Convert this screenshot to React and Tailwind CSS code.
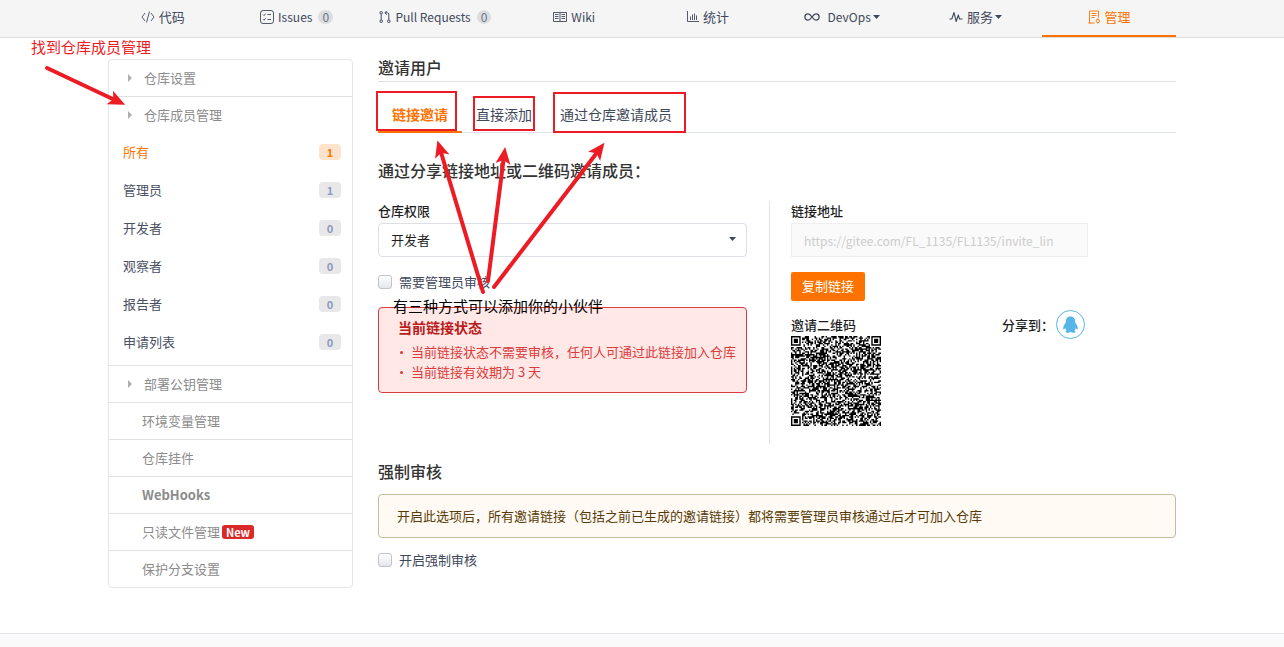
import { useState } from 'react';
import clsx from 'clsx';

function CodeIcon() {
  return (
    <svg width="14" height="14" viewBox="0 0 14 14" fill="none" stroke="currentColor" strokeWidth="0.9" aria-hidden="true">
      <path d="M4 3L1 7l3 4M10 3l3 4-3 4M8.5 1.5l-3 11" />
    </svg>
  );
}

function IssuesIcon() {
  return (
    <svg width="14" height="14" viewBox="0 0 14 14" fill="none" stroke="currentColor" strokeWidth="0.9" aria-hidden="true">
      <rect x="0.5" y="0.5" width="13" height="13" rx="2.5" />
      <path d="M3 4.6l1 1 1.6-2M3 9.2l1 1 1.6-2M7.5 4.5H11M7.5 9.5H11" />
    </svg>
  );
}

function PullIcon() {
  return (
    <svg width="12" height="14" viewBox="0 0 12 14" fill="none" stroke="currentColor" aria-hidden="true">
      <circle cx="2.2" cy="2.8" r="1.3" />
      <circle cx="2.2" cy="11.2" r="1.3" />
      <circle cx="9.8" cy="11.2" r="1.3" />
      <path d="M2.2 4.2v5.6M9.8 9.8V4.2Q9.8 2.8 8.4 2.8H6M7.8 0.9L5.9 2.8l1.9 1.9" />
    </svg>
  );
}

function WikiIcon() {
  return (
    <svg width="14" height="12" viewBox="0 0 14 12" fill="none" stroke="currentColor" strokeWidth="0.9" aria-hidden="true">
      <path d="M0.5 1.5h13v9h-13zM7 1.5v9.5M2 3.5h3.5M2 5.5h3.5M2 7.5h3.5M8.5 3.5H12M8.5 5.5H12M8.5 7.5H12" />
    </svg>
  );
}

function StatsIcon() {
  return (
    <svg width="12" height="13" viewBox="0 0 12 13" fill="none" stroke="currentColor" strokeWidth="0.9" aria-hidden="true">
      <path d="M0.5 1v10.5H12M3.5 6.5V10M5.5 4.5V10M7.5 3.5V10M9.5 5.5V10" />
    </svg>
  );
}

function DevOpsIcon() {
  return (
    <svg width="16" height="10" viewBox="0 0 16 10" fill="none" stroke="currentColor" strokeWidth="1.3" aria-hidden="true">
      <path d="M8 5C6.6 3 5.4 1.9 4 1.9a3.1 3.1 0 000 6.2C5.4 8.1 6.6 7 8 5s2.6-3.1 4-3.1a3.1 3.1 0 010 6.2C10.600 8.1 9.400 7 8 5z" />
    </svg>
  );
}

function PulseIcon() {
  return (
    <svg width="14" height="12" viewBox="0 0 14 12" fill="none" stroke="currentColor" strokeWidth="1.1" strokeLinejoin="round" aria-hidden="true">
      <path d="M0.500 8H2.800L5 1.500l2.200 9L9.300 4l1.200 4h3" />
    </svg>
  );
}

function ManageIcon() {
  return (
    <svg width="13" height="14" viewBox="0 0 13 14" fill="none" stroke="currentColor" strokeWidth="0.9" aria-hidden="true">
      <path d="M6.500 13H1.500V1h9v6.500M3.500 3.500h5M3.500 5.500h5M3.500 7.500h3M0.500 13h2" />
      <circle cx="9.800" cy="11" r="1.700" />
      <path d="M9.800 8.300v1M9.800 12.700v1" />
    </svg>
  );
}

function Caret({ className }) {
  return (
    <svg width="7" height="4" viewBox="0 0 7 4" fill="currentColor" className={className} aria-hidden="true">
      <path d="M0 0h7L3.500 4z" />
    </svg>
  );
}

function RightCaret() {
  return (
    <svg width="4" height="8" viewBox="0 0 4 8" fill="#b0b0b0" aria-hidden="true">
      <path d="M0 0l4 4-4 4z" />
    </svg>
  );
}

function QQIcon() {
  return (
    <svg width="29" height="29" viewBox="0 0 29 29" aria-hidden="true">
      <circle cx="14.500" cy="14.500" r="14" fill="#fff" stroke="#56b6e7" />
      <path
        fill="#56b6e7"
        d="M14.500 6.500c-3 0-4.800 2.200-4.700 5 0 .8-.1 1.100-.5 1.700-1.200 1.700-2.200 3.600-2.100 5.300 0 1 .4 1.300 1 .7l.9-1.100c.3 1.100.8 1.900 1.500 2.600-.8.300-1.200.8-1.100 1.400.2.900 3.700 1 5 0 1.300 1 4.800.9 5 0 .1-.6-.3-1.100-1.100-1.400.7-.7 1.200-1.500 1.500-2.600l.9 1.100c.6.6 1 .3 1-.7.100-1.700-.9-3.600-2.100-5.300-.4-.6-.5-.9-.5-1.700.1-2.800-1.700-5-4.700-5z"
      />
    </svg>
  );
}

const QR_SIZE = 65;

function finderCell(x, y) {
  const corners = [[0, 0], [QR_SIZE - 7, 0], [0, QR_SIZE - 7]];
  for (const [cx, cy] of corners) {
    const dx = x - cx;
    const dy = y - cy;
    if (dx >= -1 && dx <= 7 && dy >= -1 && dy <= 7) {
      const ring = Math.max(Math.abs(dx - 3), Math.abs(dy - 3));
      return ring !== 2 && ring !== 4;
    }
  }
  return null;
}

function buildQrPath() {
  let seed = 1135;
  let path = '';
  for (let y = 0; y < QR_SIZE; y++) {
    for (let x = 0; x < QR_SIZE; x++) {
      seed = (seed * 1103515245 + 12345) % 2147483648;
      const finder = finderCell(x, y);
      const dark = finder === null ? seed / 2147483648 < 0.54 : finder;
      if (dark) path += `M${x} ${y}h1v1h-1z`;
    }
  }
  return path;
}

const qrPath = buildQrPath();

function QrCode() {
  return (
    <svg width="90" height="90" viewBox={`0 0 ${QR_SIZE} ${QR_SIZE}`} role="img" aria-label="邀请二维码">
      <path d={qrPath} fill="#000" />
    </svg>
  );
}

const navItems = [
  { label: '代码', icon: CodeIcon },
  { label: 'Issues', icon: IssuesIcon, count: 0, latin: true },
  { label: 'Pull Requests', icon: PullIcon, count: 0, latin: true },
  { label: 'Wiki', icon: WikiIcon, latin: true },
  { label: '统计', icon: StatsIcon },
  { label: 'DevOps', icon: DevOpsIcon, dropdown: true, wide: true, latin: true },
  { label: '服务', icon: PulseIcon, dropdown: true },
  { label: '管理', icon: ManageIcon, active: true },
];

const memberItems = [
  { label: '所有', count: 1, active: true },
  { label: '管理员', count: 1 },
  { label: '开发者', count: 0 },
  { label: '观察者', count: 0 },
  { label: '报告者', count: 0 },
  { label: '申请列表', count: 0 },
];

const settingItems = [
  { label: '环境变量管理' },
  { label: '仓库挂件' },
  { label: 'WebHooks', bold: true },
  { label: '只读文件管理', isNew: true },
  { label: '保护分支设置' },
];

const linkStatus = [
  '当前链接状态不需要审核，任何人可通过此链接加入仓库',
  '当前链接有效期为 3 天',
];

const tabs = ['链接邀请', '直接添加', '通过仓库邀请成员'];

function NavBar() {
  return (
    <nav className="border-b border-[#dcdcdc] bg-[#f5f5f5]">
      <div className="mx-auto max-w-[1068px]">
        <div className="-ml-3 flex">
          {navItems.map(({ label, icon: Icon, count, dropdown, wide, latin, active }) => (
            <a
              key={label}
              href="#"
              className={clsx(
                'flex h-[37px] flex-1 items-center justify-center whitespace-nowrap border-b-2 px-4 pb-0.5',
                latin && 'text-xs',
                active ? 'border-[#fe7300] text-[#fe7300]' : 'border-transparent text-[#40485b]'
              )}
            >
              <Icon />
              <span className={wide ? 'ml-2' : 'ml-1'}>{label}</span>
              {count !== undefined && (
                <span className="ml-1.5 rounded-full bg-[#dcdddf] px-1 text-xs leading-[14px] text-[#6b7489]">{count}</span>
              )}
              {dropdown && <Caret className="ml-0.5" />}
            </a>
          ))}
        </div>
      </div>
    </nav>
  );
}

function SectionLink({ label, className }) {
  return (
    <a href="#" className={clsx('flex items-center gap-3 pl-[19px] text-[#8c8c8c]', className)}>
      <RightCaret />
      {label}
    </a>
  );
}

function Sidebar() {
  return (
    <aside className="w-[245px] shrink-0 self-start divide-y divide-[#dfe1e4] rounded border border-[#e3e6ea]">
      <SectionLink label="仓库设置" className="h-[37px]" />
      <div className="pb-1">
        <SectionLink label="仓库成员管理" className="h-9" />
        {memberItems.map(({ label, count, active }) => (
          <a
            key={label}
            href="#"
            className={clsx(
              'flex h-[38px] items-center justify-between pl-3.5 pr-[11px]',
              active ? 'text-[#fe7300]' : 'text-[#4a5163]'
            )}
          >
            {label}
            <span
              className={clsx(
                'w-[22px] rounded-sm text-center text-[11px] font-bold leading-4',
                active ? 'bg-[#ffe3cc] text-[#fe7300]' : 'bg-[#e8e8ea] text-[#8c9bbb]'
              )}
            >
              {count}
            </span>
          </a>
        ))}
      </div>
      <SectionLink label="部署公钥管理" className="h-[37px]" />
      {settingItems.map(({ label, bold, isNew }) => (
        <a key={label} href="#" className="flex h-[37px] items-center pl-[33px] text-[#8c8c8c] last:h-9">
          <span className={bold ? 'font-bold' : ''}>{label}</span>
          {isNew && (
            <span className="ml-0.5 rounded-[3px] bg-[#db2828] px-1 text-[11px] font-bold leading-[14px] text-white">New</span>
          )}
        </a>
      ))}
    </aside>
  );
}

function Checkbox({ id, label }) {
  return (
    <div className="flex h-5 items-center gap-[7px]">
      <input
        id={id}
        type="checkbox"
        className="size-3.5 appearance-none rounded-[3px] border border-[#c0c4ca] bg-linear-to-b from-white to-[#e4e6e9] checked:bg-[#fe7300]"
      />
      <label htmlFor={id}>{label}</label>
    </div>
  );
}

function InviteLink() {
  return (
    <div className="mt-[21px] flex">
      <div className="w-[49%] pr-[22px]">
        <label htmlFor="role" className="block h-[22px] font-medium text-[#1f1f1f]">仓库权限</label>
        <div className="relative">
          <select
            id="role"
            className="h-[34px] w-full appearance-none rounded-sm border border-[#dcdfe6] bg-white px-3 text-[#1f1f1f]"
          >
            <option>开发者</option>
            <option>管理员</option>
            <option>观察者</option>
            <option>报告者</option>
          </select>
          <Caret className="pointer-events-none absolute right-[11px] top-3.5 text-[#40485b]" />
        </div>
        <div className="mt-[15px]">
          <Checkbox id="need-review" label="需要管理员审核" />
        </div>
        <div className="mt-[15px] rounded border border-[#db3b3b] bg-[#ffe8e6] pb-2.5 pl-[19px] pr-1 pt-[9px] text-[#db3b3b]">
          <h3 className="text-sm font-bold leading-5 text-[#b91c1c]">当前链接状态</h3>
          <ul className="mt-[5px]">
            {linkStatus.map((text) => (
              <li key={text} className="flex items-center gap-2">
                <span className="ml-0.5 size-[3px] rounded-full bg-[#db3b3b]" />
                {text}
              </li>
            ))}
          </ul>
        </div>
      </div>
      <div className="flex-1 border-l border-[#dfe4ea] pb-[18px] pl-[21px]">
        <div className="w-[297px]">
          <label htmlFor="link" className="block h-[22px] font-medium text-[#1f1f1f]">链接地址</label>
          <input
            id="link"
            type="text"
            disabled
            defaultValue="https://gitee.com/FL_1135/FL1135/invite_link"
            className="h-[34px] w-full border border-[#eeeff1] bg-[#fafafa] pl-3 pr-[34px] text-xs text-[#cccccc]"
          />
          <button type="button" className="mt-[15px] block h-[29px] rounded-xs bg-[#fe7300] px-[11px] pb-0.5 text-white">
            复制链接
          </button>
          <div className="mt-3 flex h-[23px] items-center justify-between pr-[3px]">
            <span className="font-medium text-[#1f1f1f]">邀请二维码</span>
            <div className="flex items-center gap-0.5">
              <span className="font-medium text-[#1f1f1f]">分享到：</span>
              <a href="#" aria-label="QQ"><QQIcon /></a>
            </div>
          </div>
          <QrCode />
        </div>
      </div>
    </div>
  );
}

// Red notes over the page, drawn in the coordinates of the 1068px container
function Annotations() {
  return (
    <div className="pointer-events-none absolute left-0 top-0">
      <svg width="1068" height="400" className="overflow-visible" fill="none" stroke="#ed1c24" aria-hidden="true">
        <defs>
          <marker id="head" markerUnits="userSpaceOnUse" markerWidth="18" markerHeight="16" refX="8" refY="8" orient="auto">
            <path d="M0 0.500L17 8L0 15.500L4 8z" fill="#ed1c24" stroke="none" />
          </marker>
        </defs>
        <g strokeWidth="2">
          <rect x="269" y="54" width="79" height="38" />
          <rect x="366" y="59" width="60" height="33" />
          <rect x="446" y="55" width="131" height="39" />
        </g>
        <g strokeWidth="4" strokeLinecap="round">
          <path d="M-61 30L9 63" markerEnd="url(#head)" />
          <path d="M375 254L332 111" markerEnd="url(#head)" />
          <path d="M380 243L396 118" markerEnd="url(#head)" />
          <path d="M386 249L491 112" markerEnd="url(#head)" />
        </g>
      </svg>
      <p className="absolute -left-[77px] -top-px whitespace-nowrap text-[15px] text-[#ed1c24]">找到仓库成员管理</p>
      <p className="absolute left-[285px] top-[258px] whitespace-nowrap text-[15px] text-black">
        有三种方式可以添加你的小伙伴
      </p>
    </div>
  );
}

export default function App() {
  const [activeTab, setActiveTab] = useState(tabs[0]);

  return (
    <div className="flex min-h-screen flex-col bg-white font-['Noto_Sans_CJK_SC',sans-serif] text-[13px] leading-5 text-[#40485b]">
      <NavBar />
      <div className="relative mx-auto flex w-full max-w-[1068px] flex-1 gap-[25px] pb-11 pt-[21px]">
        <Sidebar />
        <main className="min-w-0 flex-1">
          <h1 className="border-b border-[#dfe1e4] pb-1.5 text-base font-medium leading-4 text-[#333]">邀请用户</h1>
          <div className="mt-4 flex border-b border-[#dfe4ea]">
            {tabs.map((tab) => (
              <button
                key={tab}
                type="button"
                onClick={() => setActiveTab(tab)}
                className={clsx(
                  '-mb-px h-[35px] border-b-2 px-3.5 pb-0.5 text-sm',
                  tab === activeTab ? 'border-[#fe7300] font-bold text-[#fe7300]' : 'border-transparent'
                )}
              >
                {tab}
              </button>
            ))}
          </div>
          <h2 className="mt-[27px] text-base font-medium leading-5 text-[#333]">通过分享链接地址或二维码邀请成员：</h2>
          <InviteLink />
          <h2 className="mt-[17px] text-base font-medium leading-5 text-[#333]">强制审核</h2>
          <p className="mt-[13px] rounded border border-[#c9ba9b] bg-[#fffaf3] px-[18px] py-[11px] text-[#573a08]">
            开启此选项后，所有邀请链接（包括之前已生成的邀请链接）都将需要管理员审核通过后才可加入仓库
          </p>
          <div className="mt-3">
            <Checkbox id="force-review" label="开启强制审核" />
          </div>
        </main>
        <Annotations />
      </div>
      <footer className="h-3.5 border-t border-[#e3e6ea] bg-[#fafafa]" />
    </div>
  );
}
